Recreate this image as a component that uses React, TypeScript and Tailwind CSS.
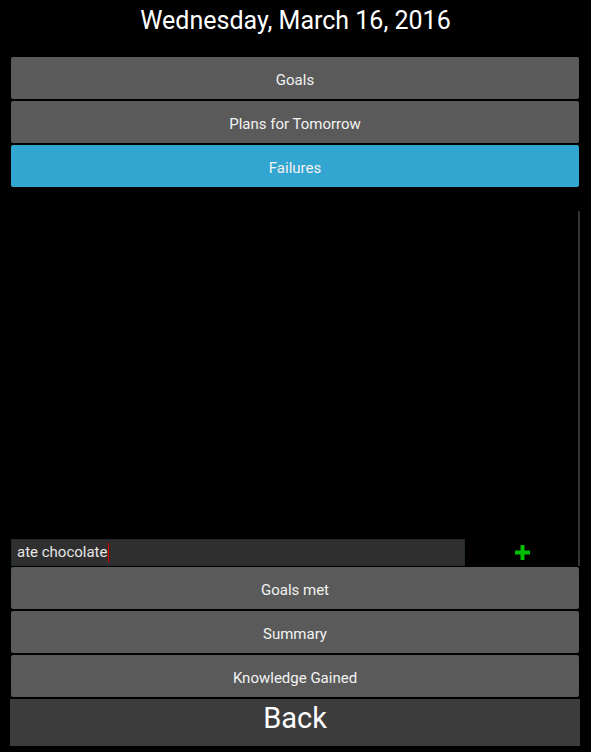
import React from "react";

const font = { fontFamily: "Roboto, 'Noto Sans', sans-serif" };

function Btn({ label, active }: { label: string; active?: boolean }) {
  return (
    <div
      className={`h-[42px] pt-[4px] rounded-[2px] flex items-center justify-center text-[15px] text-[#f2f2f2] ${
        active ? "bg-[#33a5d1]" : "bg-[#5a5a5a]"
      }`}
    >
      {label}
    </div>
  );
}

export default function App() {
  return (
    <div className="w-[591px] h-[752px] bg-black flex flex-col overflow-hidden" style={font}>
      <div className="h-[57px] pt-[5px] text-center text-[25px] leading-[32px] text-white">
        Wednesday, March 16, 2016
      </div>
      <div className="pl-[11px] pr-[12px] flex flex-col gap-[2px]">
        <Btn label="Goals" />
        <Btn label="Plans for Tomorrow" />
        <Btn label="Failures" active />
      </div>
      <div className="relative mt-[2px] flex flex-col">
        <div className="h-[350px]" />
        <div className="h-[28px] pl-[11px] pr-[12px] flex items-start">
          <div className="w-[454px] h-[27px] bg-[#2f2f2f] border border-[#1f2b2e] flex items-center pl-[5px] text-[15px] text-[#e6e6e6]">
            <span>ate chocolate</span>
            <span className="inline-block w-[1px] h-[19px] bg-[#e00000] ml-[1px]" />
          </div>
          <div className="flex-1 h-[27px] flex items-center justify-center">
            <svg width="15" height="15" viewBox="0 0 15 15">
              <rect x="5.5" y="0" width="4" height="15" fill="#00bf00" />
              <rect x="0" y="5.5" width="15" height="4" fill="#00bf00" />
            </svg>
          </div>
        </div>
        <div className="absolute right-[11px] top-[22px] bottom-[1px] w-[2px] bg-[#333333]" />
      </div>
      <div className="pl-[11px] pr-[12px] flex flex-col gap-[2px]">
        <Btn label="Goals met" />
        <Btn label="Summary" />
        <Btn label="Knowledge Gained" />
      </div>
      <div className="mt-[2px] ml-[10px] mr-[11px] h-[47px] pb-[7px] bg-[#3c3c3c] flex items-center justify-center text-[29px] text-white">
        Back
      </div>
    </div>
  );
}
